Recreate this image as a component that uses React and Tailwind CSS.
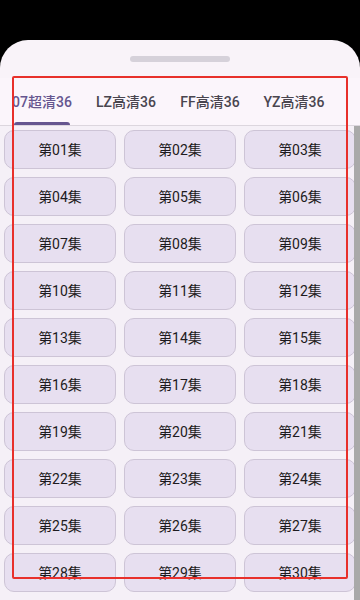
import React from "react";

const tabs = ["07超清36", "LZ高清36", "FF高清36", "YZ高清36"];

// only the rows that fit in the sheet are shown
const episodes = Array.from({ length: 30 }, (_, i) => `第${String(i + 1).padStart(2, "0")}集`);

const font = { fontFamily: 'Roboto, "Noto Sans CJK SC", sans-serif' };

export default function App() {
  return (
    <div className="relative h-[600px] w-[360px] overflow-hidden bg-black flex flex-col" style={font}>
      <div className="mt-[40px] flex-1 min-h-0 flex flex-col rounded-t-[28px] bg-[#f9f3f9] overflow-hidden">
        {/* drag handle */}
        <div className="pt-[16px] flex justify-center">
          <div className="w-[100px] h-[6px] rounded-full bg-[#d6d1da]" />
        </div>

        {/* tabs */}
        <div className="mt-[16px] h-[48px] flex border-b border-[#dcd6de] bg-[#fbf5fb] overflow-hidden">
          {tabs.map((t, i) => (
            <div key={t} className="relative w-[84px] shrink-0 flex items-center justify-center">
              <span
                className={
                  "text-[14px] font-medium leading-none " +
                  (i === 0 ? "text-[#65558f]" : "text-[#49454f]")
                }
              >
                {t}
              </span>
              {i === 0 && (
                <div className="absolute bottom-0 left-[14px] w-[56px] h-[3px] rounded-t-[3px] bg-[#65558f]" />
              )}
            </div>
          ))}
        </div>

        {/* episode grid */}
        <div className="relative flex-1 min-h-0 overflow-hidden bg-[#f5f0f7]">
          <div className="grid grid-cols-[112px_112px_112px] gap-[8px] pl-[4px] pt-[4px]">
            {episodes.map((e) => (
              <button
                key={e}
                className="h-[39px] pt-[1px] rounded-[10px] border border-[#cdc4d6] bg-[#e7dff0] text-[14px] text-[#1d1b20] flex items-center justify-center"
              >
                {e}
              </button>
            ))}
          </div>
          <div className="absolute -top-px bottom-0 right-0 w-[6px] bg-[#a9a9a9]" />
        </div>
      </div>

      {/* annotation frame */}
      <div className="absolute left-[12px] top-[76px] w-[336px] h-[503px] border-2 border-[#e8302b] rounded-[2px] pointer-events-none" />
    </div>
  );
}
